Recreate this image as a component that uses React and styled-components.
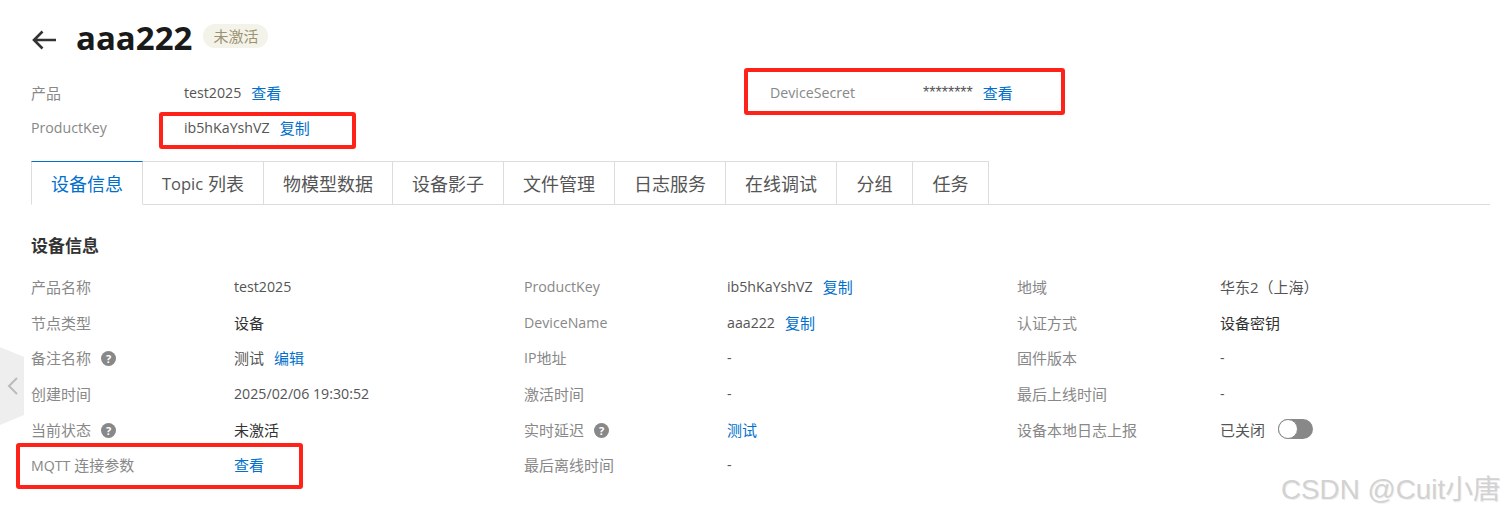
import React from 'react';
import styled, { createGlobalStyle } from 'styled-components';

const Global = createGlobalStyle`
  html, body { margin: 0; padding: 0; background: #fff; }
  body { font-family: "Open Sans", "Noto Sans CJK SC", sans-serif; font-size: 14.2px; color: #555; }
`;

const Page = styled.div`
  position: relative;
  width: 1506px;
  height: 517px;
  overflow: hidden;
  box-sizing: border-box;
  padding: 18px 16px 0 31px;
`;

const TitleRow = styled.div`
  display: flex;
  align-items: center;
  height: 40px;
`;

const BackIcon = styled.svg`
  width: 26px;
  height: 20px;
  margin: 4px 19px 0 0;
  color: #333;
`;

const Title = styled.h1`
  margin: 0 11px 0 0;
  font-size: 33px;
  line-height: 40px;
  font-weight: 700;
  color: #1a1a1a;
`;

const Badge = styled.span`
  display: inline-flex;
  align-items: center;
  justify-content: center;
  width: 65px;
  height: 24px;
  border-radius: 12px;
  background: #f4f3e9;
  color: #9a9272;
  font-size: 15px;
  margin-top: -5px;
`;

const Meta = styled.div`
  display: grid;
  grid-template-columns: 739px 1fr;
  margin-top: 17px;
`;

const MetaRow = styled.div`
  display: flex;
  align-items: center;
  height: 35px;
  grid-column: ${p => p.$col || 1};
  grid-row: ${p => p.$row || 1};
`;

const MetaLabel = styled.span`
  width: 153px;
  color: #888;
`;

// Chinese runs sit 1px larger than the latin text around them
const Zh = styled.span`
  font-size: 15px;
`;

const Value = styled.span`
  color: ${p => p.$strong ? '#333' : '#555'};
`;

const Stars = styled.span`
  font-family: "Liberation Sans", sans-serif;
  font-size: 16px;
  color: #555;
`;

const Link = styled.a`
  color: #0070cc;
  font-size: 15px;
  margin-left: ${p => p.$ml ?? 10}px;
  cursor: pointer;
`;

const Tabs = styled.div`
  display: flex;
  height: 43px;
  margin-top: 16px;
  border-bottom: 1px solid #ddd;
`;

const Tab = styled.div`
  display: flex;
  align-items: center;
  justify-content: center;
  gap: 5px;
  box-sizing: border-box;
  width: ${p => p.$w}px;
  height: 44px;
  font-size: 18px;
  color: ${p => p.$active ? '#0070cc' : '#555'};
  background: #fff;
  border: 1px solid #ddd;
  border-left: ${p => p.$active ? '1px solid #ddd' : 'none'};
  border-top: 1px solid ${p => p.$active ? '#0070cc' : '#ddd'};
  border-bottom: ${p => p.$active ? '1px solid #fff' : '1px solid #ddd'};
`;

const TabLatin = styled.span`
  font-size: 16.5px;
`;

const SectionTitle = styled.h2`
  margin: 29px 0 0;
  font-size: 17px;
  line-height: 24px;
  font-weight: 700;
  color: #333;
`;

const InfoGrid = styled.div`
  display: grid;
  grid-template-columns: repeat(3, 493px);
  grid-auto-rows: 35.6px;
  margin-top: 11px;
`;

const Cell = styled.div`
  display: flex;
  align-items: center;
`;

const CellLabel = styled.span`
  display: flex;
  align-items: center;
  width: 203px;
  color: #888;
`;

const Help = styled.span`
  display: inline-flex;
  align-items: center;
  justify-content: center;
  width: 15px;
  height: 15px;
  margin: 2px 0 0 10px;
  border-radius: 50%;
  background: #888;
  color: #fff;
  font-size: 11px;
  font-weight: 700;
`;

const Switch = styled.span`
  position: relative;
  display: inline-block;
  width: 35px;
  height: 20px;
  margin-left: 13px;
  border-radius: 10px;
  background: #888;
  &::after {
    content: '';
    position: absolute;
    left: 0;
    top: 0;
    width: 20px;
    height: 20px;
    box-sizing: border-box;
    border: 1px solid #888;
    border-radius: 50%;
    background: #fff;
  }
`;

const Handle = styled.svg`
  position: absolute;
  left: 0;
  top: 347px;
  width: 24px;
  height: 78px;
`;

const Marker = styled.div`
  position: absolute;
  left: ${p => p.$x}px;
  top: ${p => p.$y}px;
  width: ${p => p.$w}px;
  height: ${p => p.$h}px;
  box-sizing: border-box;
  border: 4px solid #ff2218;
  border-radius: 3px;
`;

const Watermark = styled.div`
  position: absolute;
  left: 1281px;
  top: 472px;
  font-family: "Liberation Sans", "Noto Sans CJK SC", sans-serif;
  font-size: 27.8px;
  line-height: 36px;
  white-space: nowrap;
  color: #d2d2d2;
  text-shadow: 1px 1px 1px #eee;
`;

const tabs = [
  ['设备信息', 112], ['列表', 121, 'Topic'], ['物模型数据', 129], ['设备影子', 111], ['文件管理', 111],
  ['日志服务', 111], ['在线调试', 111], ['分组', 76], ['任务', 76],
];

export default function App() {
  return (
    <Page>
      <Global />
      <TitleRow>
        <BackIcon viewBox="0 0 26 20" fill="none" stroke="currentColor" strokeWidth="2.6">
          <path d="M25 10H3M11.5 1.5L3 10l8.5 8.5" />
        </BackIcon>
        <Title>aaa222</Title>
        <Badge>未激活</Badge>
      </TitleRow>

      <Meta>
        <MetaRow $row={1}><MetaLabel><Zh>产品</Zh></MetaLabel><Value>test2025</Value><Link>查看</Link></MetaRow>
        <MetaRow $row={2}><MetaLabel>ProductKey</MetaLabel><Value>ib5hKaYshVZ</Value><Link>复制</Link></MetaRow>
        <MetaRow $col={2} $row={1}><MetaLabel>DeviceSecret</MetaLabel><Stars>********</Stars><Link>查看</Link></MetaRow>
      </Meta>

      <Tabs>
        {tabs.map(([name, w, latin], i) => (
          <Tab key={name} $w={w} $active={i === 0}>
            {latin && <TabLatin>{latin}</TabLatin>}
            <span>{name}</span>
          </Tab>
        ))}
      </Tabs>

      <SectionTitle>设备信息</SectionTitle>
      <InfoGrid>
        <Cell><CellLabel><Zh>产品名称</Zh></CellLabel><Value>test2025</Value></Cell>
        <Cell><CellLabel>ProductKey</CellLabel><Value>ib5hKaYshVZ</Value><Link>复制</Link></Cell>
        <Cell><CellLabel><Zh>地域</Zh></CellLabel><Value><Zh>华东2（上海）</Zh></Value></Cell>

        <Cell><CellLabel><Zh>节点类型</Zh></CellLabel><Value $strong><Zh>设备</Zh></Value></Cell>
        <Cell><CellLabel>DeviceName</CellLabel><Value>aaa222</Value><Link>复制</Link></Cell>
        <Cell><CellLabel><Zh>认证方式</Zh></CellLabel><Value $strong><Zh>设备密钥</Zh></Value></Cell>

        <Cell><CellLabel><Zh>备注名称</Zh><Help>?</Help></CellLabel><Value><Zh>测试</Zh></Value><Link>编辑</Link></Cell>
        <Cell><CellLabel>IP<Zh>地址</Zh></CellLabel><Value>-</Value></Cell>
        <Cell><CellLabel><Zh>固件版本</Zh></CellLabel><Value>-</Value></Cell>

        <Cell><CellLabel><Zh>创建时间</Zh></CellLabel><Value>2025/02/06 19:30:52</Value></Cell>
        <Cell><CellLabel><Zh>激活时间</Zh></CellLabel><Value>-</Value></Cell>
        <Cell><CellLabel><Zh>最后上线时间</Zh></CellLabel><Value>-</Value></Cell>

        <Cell><CellLabel><Zh>当前状态</Zh><Help>?</Help></CellLabel><Value $strong><Zh>未激活</Zh></Value></Cell>
        <Cell><CellLabel><Zh>实时延迟</Zh><Help>?</Help></CellLabel><Link $ml={0}>测试</Link></Cell>
        <Cell><CellLabel><Zh>设备本地日志上报</Zh></CellLabel><Value><Zh>已关闭</Zh></Value><Switch /></Cell>

        <Cell><CellLabel><span>MQTT <Zh>连接参数</Zh></span></CellLabel><Link $ml={0}>查看</Link></Cell>
        <Cell><CellLabel><Zh>最后离线时间</Zh></CellLabel><Value>-</Value></Cell>
      </InfoGrid>

      <Handle viewBox="0 0 24 78">
        <path d="M0 0L24 10V68L0 78Z" fill="#eeeeee" />
        <path d="M17 31l-8 8 8 8" fill="none" stroke="#bbbbbb" strokeWidth="2" />
      </Handle>

      <Marker $x={159} $y={112} $w={197} $h={37} />
      <Marker $x={744} $y={68} $w={321} $h={47} />
      <Marker $x={16} $y={443} $w={287} $h={46} />
      <Watermark>CSDN @Cuit小唐</Watermark>
    </Page>
  );
}
